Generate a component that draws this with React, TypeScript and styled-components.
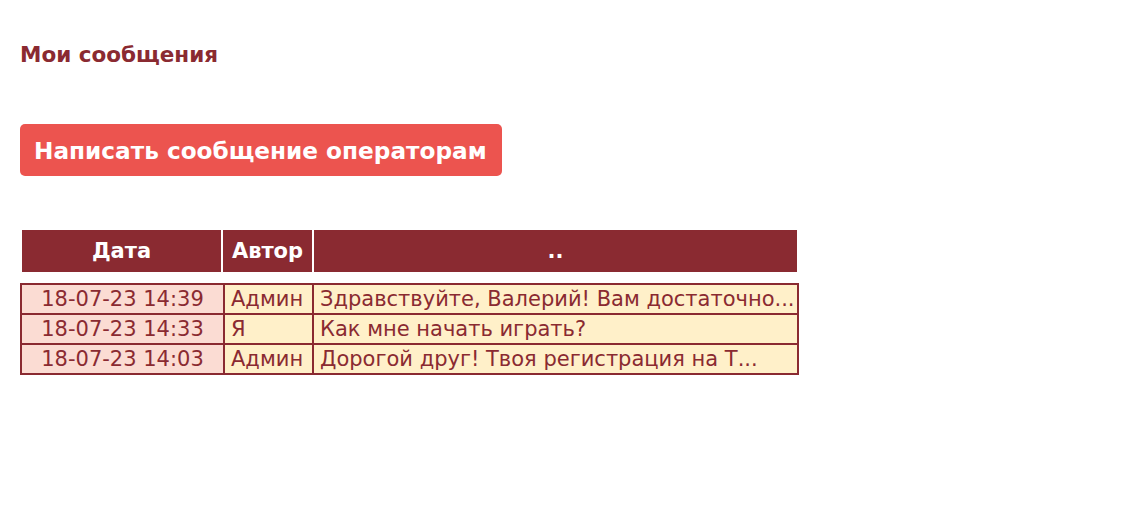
import React from "react";
import styled, { createGlobalStyle } from "styled-components";

const GlobalStyle = createGlobalStyle`
  html, body { margin: 0; padding: 0; background: #ffffff; }
  body { font-family: "DejaVu Sans", sans-serif; }
`;

const Page = styled.div`
  padding: 41px 20px 20px 20px;
  display: flex;
  flex-direction: column;
  align-items: flex-start;
`;

const Title = styled.h1`
  margin: 0;
  font-size: 21.5px;
  line-height: 28px;
  font-weight: bold;
  color: #8a2a31;
`;

const WriteButton = styled.button`
  margin-top: 55px;
  height: 52px;
  width: 482px;
  border: none;
  border-radius: 5px;
  background: #ec544f;
  color: #ffffff;
  font-family: "DejaVu Sans", sans-serif;
  font-weight: bold;
  font-size: 23.2px;
  padding: 0 14px;
  text-align: left;
  white-space: nowrap;
  cursor: pointer;
`;

const HeadTable = styled.table`
  margin-top: 52px;
  border-collapse: separate;
  border-spacing: 2px;
  width: 779px;
  table-layout: fixed;
`;

const HeadCell = styled.th<{ $w: number }>`
  width: ${(p) => p.$w}px;
  height: 42px;
  padding: 0;
  background: #8a2a31;
  color: #ffffff;
  font-size: 21px;
  font-weight: bold;
  text-align: center;
`;

const DataTable = styled.table`
  margin-top: 9px;
  border-collapse: collapse;
  width: 779px;
  table-layout: fixed;
  border: 2px solid #8a2a31;
`;

const DataCell = styled.td<{ $tone: "pink" | "cream"; $align?: string; $w?: number }>`
  ${(p) => (p.$w ? `width: ${p.$w}px;` : "")}
  border: 2px solid #8a2a31;
  background: ${(p) => (p.$tone === "pink" ? "#fbdcd3" : "#fff0c9")};
  color: #8a2a31;
  font-size: 21px;
  line-height: 26px;
  height: 26px;
  padding: 1px 6px;
  text-align: ${(p) => p.$align || "left"};
  white-space: nowrap;
  overflow: hidden;
`;

const rows = [
  { date: "18-07-23 14:39", author: "Админ", text: "Здравствуйте, Валерий! Вам достаточно..." },
  { date: "18-07-23 14:33", author: "Я", text: "Как мне начать играть?" },
  { date: "18-07-23 14:03", author: "Админ", text: "Дорогой друг! Твоя регистрация на Т..." },
];

export default function App() {
  return (
    <>
      <GlobalStyle />
      <Page>
        <Title>Мои сообщения</Title>
        <WriteButton>Написать сообщение операторам</WriteButton>
        <HeadTable>
          <thead>
            <tr>
              <HeadCell $w={199}>Дата</HeadCell>
              <HeadCell $w={89}>Автор</HeadCell>
              <HeadCell $w={483}>..</HeadCell>
            </tr>
          </thead>
        </HeadTable>
        <DataTable>
          <tbody>
            {rows.map((r, i) => (
              <tr key={i}>
                <DataCell $tone="pink" $align="center" $w={189}>{r.date}</DataCell>
                <DataCell $tone="cream" $w={75}>{r.author}</DataCell>
                <DataCell $tone="cream">{r.text}</DataCell>
              </tr>
            ))}
          </tbody>
        </DataTable>
      </Page>
    </>
  );
}
